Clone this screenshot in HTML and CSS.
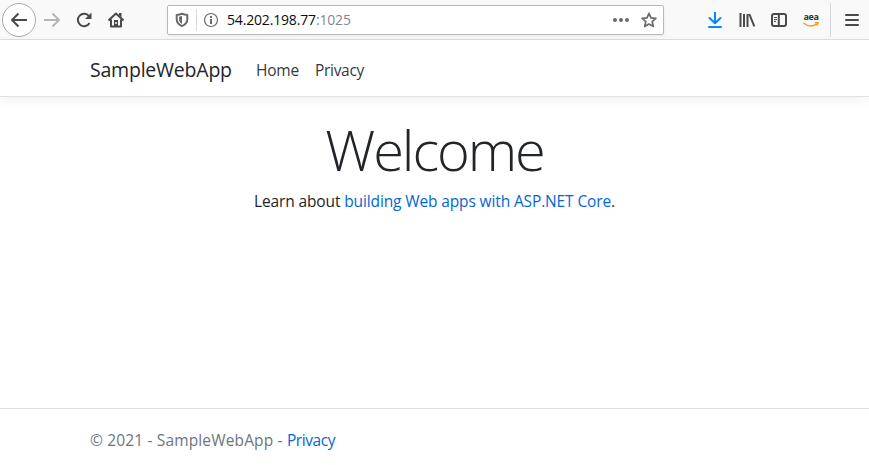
FILE: index.html
```html
<!DOCTYPE html>
<html lang="en">
<head>
<meta charset="utf-8">
<title>Home page - SampleWebApp</title>
<link rel="stylesheet" href="styles.css">
</head>
<body>
<div class="toolbar">
  <div class="nav-buttons">
    <span class="back"><svg class="icon" viewBox="0 0 16 16"><path d="M16 8H1.500M7.500 1.500L1 8l6.500 6.500"/></svg></span>
    <svg class="icon disabled" viewBox="0 0 16 16"><path d="M0 8h14.500M8.500 1.500L15 8l-6.500 6.500"/></svg>
    <svg class="icon" viewBox="0 0 16 16"><path d="M13.500 11A6.200 6.200 0 1 1 13 4.200"/><path class="solid" d="M15.500 .5v6.500H9z"/></svg>
    <svg class="icon" viewBox="0 0 16 16"><path d="M.5 8.500L8 1.500l7.500 7M3 7.500V14.500h10V7.500"/><path class="solid" d="M6 8h4v6H6zM11 1h2.500v4.500L11 3z"/><path class="hole" d="M8 10v2"/></svg>
  </div>
  <div class="address">
    <svg class="icon shield" viewBox="0 0 16 16"><path d="M8 1.800c2 .8 3.500 1 5.300 1.100v4.200c0 3.400-2 5.700-5.300 7.100-3.300-1.400-5.300-3.700-5.300-7.100V2.900C4.500 2.800 6 2.600 8 1.800z"/><path class="solid" d="M8 4v8c-2-1.200-3-2.700-3-5V4.800z"/></svg>
    <span class="divider"></span>
    <svg class="icon info" viewBox="0 0 16 16"><circle cx="8" cy="8" r="6.500"/><path class="solid" d="M7 4h2v2H7zM7 7h2v5H7z"/></svg>
    <span class="url">54.202.198.77<span class="port">:1025</span></span>
    <svg class="icon dots" viewBox="0 0 16 16"><circle class="solid" cx="2" cy="8" r="2"/><circle class="solid" cx="8" cy="8" r="2"/><circle class="solid" cx="14" cy="8" r="2"/></svg>
    <svg class="icon star" viewBox="0 0 16 16"><path d="M8 1.300l2 4.500 4.900.5-3.700 3.300 1.100 4.900L8 12l-4.300 2.500 1.100-4.900L1.100 6.300 6 5.800z"/></svg>
  </div>
  <div class="tools">
    <svg class="icon download" viewBox="0 0 16 16"><path d="M8 0v11M2.500 6L8 11.300 13.500 6M2 15h12"/></svg>
    <svg class="icon" viewBox="0 0 16 16"><path d="M1.500 1v14M5 2v13M8.500 2v13M10.300 2l5 12.500"/></svg>
    <svg class="icon" viewBox="0 0 16 16"><rect x="1" y="2" width="14" height="12" rx="2"/><path d="M7.800 2v12"/><path class="thin" d="M3 5.500h3M3 7.500h3M3 9.500h2"/></svg>
    <span class="aea"><span class="aea-text">aea</span><svg class="smile" viewBox="0 0 16 6"><path d="M.5 1q7 5.500 13 1.200M12 .8l3-.2-1 2.800"/></svg></span>
    <span class="tools-divider"></span>
    <svg class="icon menu" viewBox="0 0 16 16"><path d="M2 3h12M2 8h12M2 13h12"/></svg>
  </div>
</div>
<header class="site-header">
  <a class="brand">SampleWebApp</a>
  <a class="nav-home">Home</a>
  <a class="nav-privacy">Privacy</a>
</header>
<main>
  <h1><span>Welcome</span></h1>
  <p><span class="learn">Learn about <a>building Web apps with ASP.NET Core</a>.</span></p>
</main>
<footer><span class="copy">© 2021 - SampleWebApp - <a>Privacy</a></span></footer>
</body>
</html>
```
FILE: styles.css
```css
* { box-sizing: border-box; }
body {
  margin: 0;
  height: 465px;
  display: flex;
  flex-direction: column;
  overflow: hidden;
  background: #fff;
  color: #212529;
  font: 15.500px/24px "Segoe UI", "Open Sans", "Noto Sans", sans-serif;
}
.toolbar {
  height: 40px;
  flex: none;
  display: flex;
  align-items: center;
  background: #f9f9fa;
  border-bottom: 1px solid #dedede;
}
.icon {
  width: 16px;
  height: 16px;
  flex: none;
  fill: none;
  stroke: #4a4a4c;
  stroke-width: 2;
  stroke-linejoin: round;
}
.icon .solid { fill: #4a4a4c; stroke: none; }
.icon .hole { stroke: #f9f9fa; stroke-width: 1.500; }
.icon .thin { stroke-width: 1; }
.disabled { stroke: #b5b5b6; }
.nav-buttons { display: flex; align-items: center; gap: 16px; width: 167px; padding-left: 2px; }
.back {
  width: 34px;
  height: 34px;
  margin-right: -8px;
  display: grid;
  place-items: center;
  border: 1px solid #a8a8a9;
  border-radius: 50%;
  background: #fff;
}
.address {
  width: 497px;
  height: 30px;
  display: flex;
  align-items: center;
  padding: 0 6px;
  background: #fff;
  border: 1px solid #b8b8b9;
  border-radius: 2px;
  box-shadow: 0 1px 3px rgba(0, 0, 0, .06);
}
.address .icon { stroke: #6a6a6c; }
.address .icon .solid { fill: #6a6a6c; }
.divider { width: 1px; height: 22px; margin: 0 6px; background: #dadada; }
.address .info { stroke-width: 1.200; }
.url { margin-left: 8px; font-size: 14px; color: #0c0c0d; letter-spacing: -.170px; }
.port { color: #87878a; }
.dots { margin-left: auto; margin-right: 12px; }
.address .star { stroke-width: 1.700; }
.tools { display: flex; align-items: center; gap: 16px; margin-left: 43px; height: 100%; }
.download { stroke: #0a84ff; stroke-linecap: round; }
.aea { width: 16px; height: 18px; display: flex; flex-direction: column; align-items: center; }
.aea-text { font: bold 9px/11px "Open Sans", sans-serif; letter-spacing: -.4px; color: #273444; }
.smile { width: 16px; height: 6px; fill: none; stroke: #f79b20; stroke-width: 1.500; }
.tools-divider { width: 1px; height: 34px; margin: 0 -3px 0 -5px; background: #d7d7db; }
.menu { stroke-linecap: round; }
.site-header {
  height: 57px;
  flex: none;
  display: flex;
  align-items: center;
  padding: 3px 90px 0;
  border-bottom: 1px solid #dee2e6;
  box-shadow: 0 4px 12px rgba(0, 0, 0, .05);
  color: #343a40;
  white-space: nowrap;
}
.brand { width: 166px; font-size: 19.500px; color: #212529; letter-spacing: -.220px; }
.nav-home { width: 59px; letter-spacing: -.2px; }
.nav-privacy { letter-spacing: -.3px; }
main { flex: 1; padding-top: 19px; text-align: center; }
h1 { margin: 0; font-weight: 300; font-size: 56px; line-height: 67px; letter-spacing: -2.100px; }
p { margin: 6px 0 0; letter-spacing: -.130px; }
main a, footer a { color: #0366d6; }
footer {
  height: 57px;
  flex: none;
  padding: 19px 90px;
  border-top: 1px solid #dee2e6;
  color: #6c757d;
  letter-spacing: .150px;
}
footer a { letter-spacing: -.4px; }
```
